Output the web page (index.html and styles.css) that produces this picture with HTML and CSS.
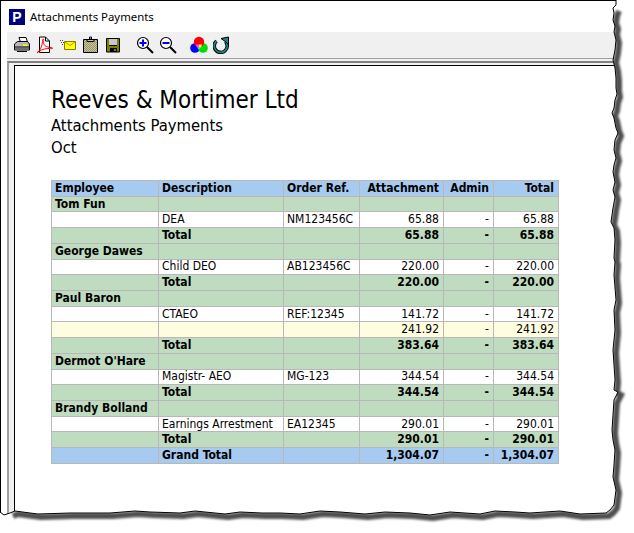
FILE: index.html
```html
<!DOCTYPE html>
<html lang="en">
<head>
<meta charset="utf-8">
<title>Attachments Payments</title>
<link rel="stylesheet" href="styles.css">
</head>
<body>
<div class="window">
  <header class="titlebar">
    <span class="app-logo">P</span>
    <span class="app-title">Attachments Payments</span>
  </header>
  <div class="client">
    <nav class="toolbar">
      <span class="tool"><svg width="18" height="18" viewBox="0 0 18 18"><path d="M6 1.500h7l1.500 4.500h-7z" fill="#fff" stroke="#000"/><path d="M1.500 8l3-2.500h10l2 2.500v6h-15z" fill="#b8b8b8" stroke="#000"/><path d="M1.500 11h15" stroke="#000"/><path d="M2 12h14v2H2z" fill="#707070"/><path d="M10 8.500h4v1.500h-4z" fill="#ffff00"/><path d="M4 15h10v1H4z" fill="#000"/></svg></span>
      <span class="tool"><svg width="18" height="18" viewBox="0 0 18 18"><path d="M3.500 1h6l4 4v11.500h-10z" fill="#fff" stroke="#000"/><path d="M9.500 1v4h4" fill="none" stroke="#000"/><path d="M1 16.500c3-1.500 5-6 5.500-11 0-4 2-3 1 0-.5 3 2 6 8 6 2 .5 1 1.500-1 1-3-.5-9 1-11 2.500-1 1-2 2-2.500 1.500z" fill="none" stroke="#f00"/></svg></span>
      <span class="tool"><svg width="18" height="18" viewBox="0 0 18 18"><path d="M1 4h1v1H1zM3 4h1v1H3zM2 6h1v1H2zM4 6h1v1H4zM3 8h1v1H3z" fill="#444"/><path d="M5.500 5.500h11v8h-11z" fill="#ffff00" stroke="#808000"/><path d="M6 6l5 3.500 5-3.500" fill="none" stroke="#b0a000"/></svg></span>
      <span class="tool"><svg width="18" height="18" viewBox="0 0 18 18"><defs><pattern id="chk" width="2" height="2" patternUnits="userSpaceOnUse"><path d="M0 0h2v2H0z" fill="#c8c4a0"/><path d="M0 0h1v1H0zM1 1h1v1H1z" fill="#98946a"/></pattern></defs><path d="M1.500 3.500h14v13h-14z" fill="url(#chk)" stroke="#000"/><path d="M5 3.500h7v2H5z" fill="#c8c4a0" stroke="#000"/><path d="M7.500 1h2v2h-2z" fill="none" stroke="#000"/></svg></span>
      <span class="tool"><svg width="18" height="18" viewBox="0 0 18 18"><path d="M1.500 2.500h13v13.500h-13z" fill="#808000" stroke="#000"/><path d="M4 3h8v6H4z" fill="#c8c8c8"/><path d="M4 9h8v1H4z" fill="#000"/><path d="M5 12h7v4H5z" fill="#000"/><path d="M9 13h2v2H9z" fill="#808000"/></svg></span>
      <span class="tool tool-gap"><svg width="18" height="18" viewBox="0 0 18 18"><circle cx="7" cy="7" r="5.500" fill="#fff" stroke="#000" stroke-width="1.200"/><path d="M11 11l6 6" stroke="#000" stroke-width="2"/><path d="M3.500 6h7v2h-7z" fill="#0000e0"/><path d="M6 3.500h2v7H6z" fill="#0000e0"/></svg></span>
      <span class="tool"><svg width="18" height="18" viewBox="0 0 18 18"><circle cx="7" cy="7" r="5.500" fill="#fff" stroke="#000" stroke-width="1.200"/><path d="M11 11l6 6" stroke="#000" stroke-width="2"/><path d="M3.500 6h7v2h-7z" fill="#0000e0"/></svg></span>
      <span class="tool tool-gap"><svg width="18" height="18" viewBox="0 0 18 18"><circle cx="5" cy="12" r="4.800" fill="#0000ff"/><circle cx="13" cy="12" r="4.800" fill="#00e000"/><circle cx="9" cy="6" r="5.200" fill="#ff0000"/><path d="M6 8.500h3v3H7z" fill="#ff40ff"/><path d="M9 8.500h3l-1 3H9z" fill="#ffff30"/><path d="M7 11.500h4l-2 2z" fill="#30e8e8"/></svg></span>
      <span class="tool"><svg width="18" height="18" viewBox="0 0 18 18"><path d="M3.500 5a6.500 6.500 0 1 0 9 .5" fill="none" stroke="#000" stroke-width="3.600"/><path d="M3.500 5a6.500 6.500 0 1 0 9 .5" fill="none" stroke="#1f8080" stroke-width="1.800"/><path d="M8 2.500l7.500-1.500v7.500l-2.500-2.500z" fill="#1f8080" stroke="#000"/></svg></span>
    </nav>
    <div class="toolbar-rule"></div>
    <div class="viewer">
      <main class="report">
        <h1 class="report-company">Reeves &amp; Mortimer Ltd</h1>
        <p class="report-name">Attachments Payments</p>
        <p class="report-period">Oct</p>
        <table class="grid">
          <colgroup><col class="c1"><col class="c2"><col class="c3"><col class="c4"><col class="c5"><col class="c6"></colgroup>
          <thead>
            <tr class="band-blue b"><th>Employee</th><th>Description</th><th>Order Ref.</th><th class="n">Attachment</th><th class="n">Admin</th><th class="n">Total</th></tr>
          </thead>
          <tbody>
            <tr class="band-green b"><td>Tom Fun</td><td></td><td></td><td></td><td></td><td></td></tr>
            <tr><td></td><td>DEA</td><td>NM123456C</td><td class="n">65.88</td><td class="n">-</td><td class="n">65.88</td></tr>
            <tr class="band-green b"><td></td><td>Total</td><td></td><td class="n">65.88</td><td class="n">-</td><td class="n">65.88</td></tr>
            <tr class="band-green b"><td>George Dawes</td><td></td><td></td><td></td><td></td><td></td></tr>
            <tr><td></td><td>Child DEO</td><td>AB123456C</td><td class="n">220.00</td><td class="n">-</td><td class="n">220.00</td></tr>
            <tr class="band-green b"><td></td><td>Total</td><td></td><td class="n">220.00</td><td class="n">-</td><td class="n">220.00</td></tr>
            <tr class="band-green b"><td>Paul Baron</td><td></td><td></td><td></td><td></td><td></td></tr>
            <tr><td></td><td>CTAEO</td><td>REF:12345</td><td class="n">141.72</td><td class="n">-</td><td class="n">141.72</td></tr>
            <tr class="band-cream"><td></td><td></td><td></td><td class="n">241.92</td><td class="n">-</td><td class="n">241.92</td></tr>
            <tr class="band-green b"><td></td><td>Total</td><td></td><td class="n">383.64</td><td class="n">-</td><td class="n">383.64</td></tr>
            <tr class="band-green b"><td>Dermot O'Hare</td><td></td><td></td><td></td><td></td><td></td></tr>
            <tr><td></td><td>Magistr- AEO</td><td>MG-123</td><td class="n">344.54</td><td class="n">-</td><td class="n">344.54</td></tr>
            <tr class="band-green b"><td></td><td>Total</td><td></td><td class="n">344.54</td><td class="n">-</td><td class="n">344.54</td></tr>
            <tr class="band-green b"><td>Brandy Bolland</td><td></td><td></td><td></td><td></td><td></td></tr>
            <tr><td></td><td>Earnings Arrestment</td><td>EA12345</td><td class="n">290.01</td><td class="n">-</td><td class="n">290.01</td></tr>
            <tr class="band-green b"><td></td><td>Total</td><td></td><td class="n">290.01</td><td class="n">-</td><td class="n">290.01</td></tr>
            <tr class="band-blue b"><td></td><td>Grand Total</td><td></td><td class="n">1,304.07</td><td class="n">-</td><td class="n">1,304.07</td></tr>
          </tbody>
        </table>
      </main>
    </div>
  </div>
</div>
<svg class="torn" width="634" height="533" viewBox="0 0 634 533" aria-hidden="true">
  <defs>
    <filter id="soft" x="-5%" y="-5%" width="110%" height="110%"><feGaussianBlur stdDeviation="1.300"/></filter>
    <clipPath id="outside"><path d="M616 0L616 5L613 8L614 13L613 20L615 26L614 32L616 40L615 50L613 60L615 68L616 78L616 88L617 94L615 100L614 108L612 113L614 118L616 128L618 133L615 140L614 150L616 158L614 165L613 172L615 182L613 190L615 197L613 208L611 222L614 228L615 240L614 258L615 262L614 275L616 300L614 310L615 330L613 350L614 365L615 380L614 390L618 392L614 400L613 415L612 430L613 440L615 450L614 465L613 477L616 490L614 505L610 510L606 513L580 514L560 511L530 513L515 512L495 511L480 514L450 512L430 515L410 513L385 512L365 514L340 512L320 511L300 514L280 513L262 513L240 512L225 514L195 511L180 513L150 512L135 511L110 513L70 513L38 514L30 513L15 511L10 513L4 515L0 512L0 533L634 533L634 0Z"/></clipPath>
  </defs>
  <path class="torn-paper" d="M616 0L616 5L613 8L614 13L613 20L615 26L614 32L616 40L615 50L613 60L615 68L616 78L616 88L617 94L615 100L614 108L612 113L614 118L616 128L618 133L615 140L614 150L616 158L614 165L613 172L615 182L613 190L615 197L613 208L611 222L614 228L615 240L614 258L615 262L614 275L616 300L614 310L615 330L613 350L614 365L615 380L614 390L618 392L614 400L613 415L612 430L613 440L615 450L614 465L613 477L616 490L614 505L610 510L606 513L580 514L560 511L530 513L515 512L495 511L480 514L450 512L430 515L410 513L385 512L365 514L340 512L320 511L300 514L280 513L262 513L240 512L225 514L195 511L180 513L150 512L135 511L110 513L70 513L38 514L30 513L15 511L10 513L4 515L0 512L0 533L634 533L634 0Z"/>
  <g clip-path="url(#outside)"><path class="torn-shadow" filter="url(#soft)" d="M616 8L614 13L613 20L615 26L614 32L616 40L615 50L613 60L615 68L616 78L616 88L617 94L615 100L614 108L612 113L614 118L616 128L618 133L615 140L614 150L616 158L614 165L613 172L615 182L613 190L615 197L613 208L611 222L614 228L615 240L614 258L615 262L614 275L616 300L614 310L615 330L613 350L614 365L615 380L614 390L618 392L614 400L613 415L612 430L613 440L615 450L614 465L613 477L616 490L614 505L610 510L606 513L580 514L560 511L530 513L515 512L495 511L480 514L450 512L430 515L410 513L385 512L365 514L340 512L320 511L300 514L280 513L262 513L240 512L225 514L195 511L180 513L150 512L135 511L110 513L70 513L38 514L30 513L15 511L10 513"/></g>
  <path class="torn-line" d="M616 0L616 5L613 8L614 13L613 20L615 26L614 32L616 40L615 50L613 60L615 68L616 78L616 88L617 94L615 100L614 108L612 113L614 118L616 128L618 133L615 140L614 150L616 158L614 165L613 172L615 182L613 190L615 197L613 208L611 222L614 228L615 240L614 258L615 262L614 275L616 300L614 310L615 330L613 350L614 365L615 380L614 390L618 392L614 400L613 415L612 430L613 440L615 450L614 465L613 477L616 490L614 505L610 510L606 513L580 514L560 511L530 513L515 512L495 511L480 514L450 512L430 515L410 513L385 512L365 514L340 512L320 511L300 514L280 513L262 513L240 512L225 514L195 511L180 513L150 512L135 511L110 513L70 513L38 514L30 513L15 511L10 513L4 515L0 512"/>
</svg>
</body>
</html>
```
FILE: styles.css
```css
html, body { margin: 0; padding: 0; background: #fff; }
body { position: relative; width: 634px; height: 533px; overflow: hidden; font-family: "DejaVu Sans Condensed", "Noto Sans", sans-serif; color: #000; }
.window { height: 532px; border-top: 1px solid #000; border-left: 1px solid #000; display: flex; flex-direction: column; }
.titlebar { height: 31px; display: flex; align-items: center; padding-left: 8px; gap: 5px; flex: none; }
.app-logo { width: 16px; height: 16px; background: #000080; color: #fff; font: bold 14px/16px "Liberation Sans", sans-serif; text-align: center; }
.app-title { font: 11.4px/16px "Noto Sans", sans-serif; }
.client { flex: 1; padding-left: 6px; display: flex; flex-direction: column; min-height: 0; }
.toolbar { height: 26px; background: #f0f0f0; display: flex; align-items: center; padding-left: 6px; flex: none; }
.tool { width: 23px; height: 18px; display: flex; flex: none; }
.tool-gap { margin-left: 8px; }
.toolbar-rule { height: 2px; border-top: 1px solid #a0a0a0; background: #f0f0f0; flex: none; }
.viewer { flex: 1; min-height: 0; border-left: 2px solid #a0a0a0; border-top: 2px solid #808080; background: #f0f0f0; padding: 2px 0 0 5px; display: flex; }
.report { flex: 1; background: #fff; border-left: 1px solid #000; border-top: 1px solid #000; padding: 20px 0 0 36px; }
.report-company { margin: 0; font-size: 24px; line-height: 28px; font-weight: 400; }
.report-name { margin: 1px 0 0; font-size: 16.5px; line-height: 22px; }
.report-period { margin: 0; font-size: 16.5px; line-height: 22px; }
.grid { margin-top: 21px; width: 507px; height: 284px; table-layout: fixed; border-collapse: collapse; border: 1px solid #808080; font-size: 12px; }
.c1 { width: 107px; }
.c2 { width: 125px; }
.c3 { width: 76px; }
.c4 { width: 84px; }
.c5 { width: 50px; }
.c6 { width: 65px; }
.grid th, .grid td { padding: 0 4px 0 3px; border: 1px solid #b8b8b8; text-align: left; font-weight: 400; line-height: 13px; height: 14.7px; white-space: nowrap; overflow: hidden; }
.grid .b th, .grid .b td { font-weight: 700; }
.grid .n { text-align: right; }
.band-blue { background: #a6caf0; }
.band-green { background: #c0dcc0; }
.band-cream { background: #fffde0; }
.torn { position: absolute; left: 0; top: 0; pointer-events: none; }
.torn-paper { fill: #fff; }
.torn-shadow { fill: none; stroke: #505050; stroke-width: 6; transform: translate(3px, 3px); }
.torn-line { fill: none; stroke: #000; stroke-width: 1; }
```
